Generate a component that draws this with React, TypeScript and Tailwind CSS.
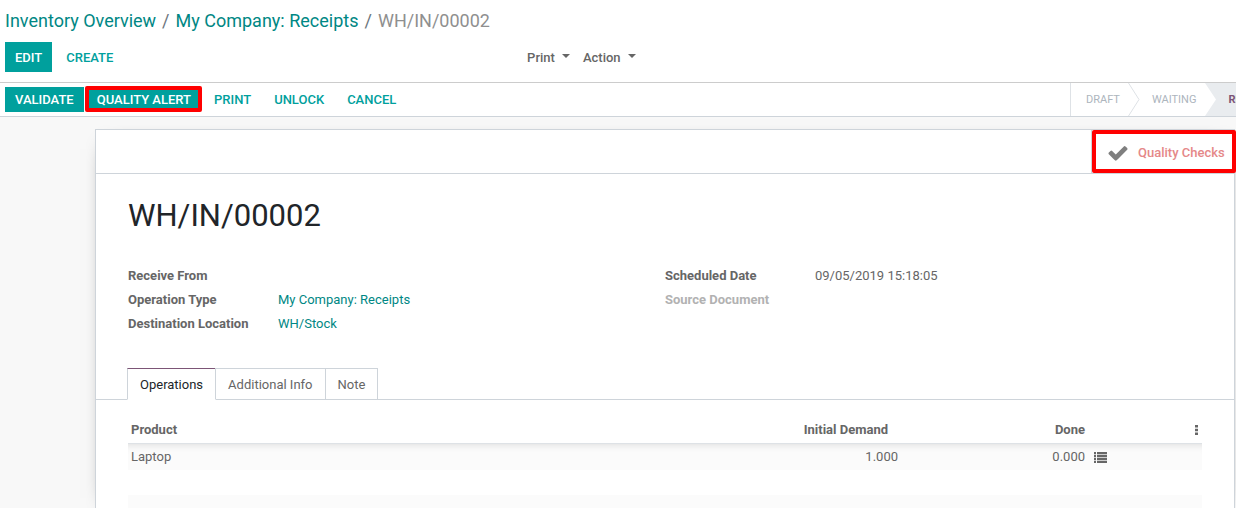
import React from "react";

const Caret = () => (
  <svg className="mb-1 h-1 w-2" viewBox="0 0 8 4" fill="currentColor" aria-hidden="true">
    <path d="M0 0h8L4 4z" />
  </svg>
);

const Chevron = ({ filled = false }: { filled?: boolean }) => (
  <svg className="h-full w-3 shrink-0" viewBox="0 0 12 33" preserveAspectRatio="none" aria-hidden="true">
    {filled && <path d="M0 0h12v33H0L11 16.5z" fill="#e9ecef" />}
    {!filled && <path d="M0.5 0L11 16.5L0.5 33" fill="none" stroke="#dee2e6" strokeWidth="1" />}
  </svg>
);

const CheckIcon = () => (
  <svg className="size-[22px] shrink-0" viewBox="0 0 1792 1792" fill="#7f7f7f" aria-hidden="true">
    <path d="M1671 566q0 40-28 68l-724 724-136 136q-28 28-68 28t-68-28l-136-136-362-362q-28-28-28-68t28-68l136-136q28-28 68-28t68 28l294 295 656-657q28-28 68-28t68 28l136 136q28 28 28 68z" />
  </svg>
);

const ListIcon = () => (
  <svg className="h-[11px] w-[13px]" viewBox="0 0 13 11" fill="currentColor" aria-hidden="true">
    <path d="M0 0h2v2H0zM3 0h10v2H3zM0 3h2v2H0zM3 3h10v2H3zM0 6h2v2H0zM3 6h10v2H3zM0 9h2v2H0zM3 9h10v2H3z" />
    <path d="M0 2h2v1H0zM3 2h10v1H3zM0 5h2v1H0zM3 5h10v1H3zM0 8h2v1H0zM3 8h10v1H3z" opacity="0.3" />
  </svg>
);

const DotsIcon = () => (
  <svg className="h-[10px] w-[3px]" viewBox="0 0 3 10" fill="currentColor" aria-hidden="true">
    <path d="M0 0h3v2.6H0zM0 3.7h3v2.6H0zM0 7.4h3V10H0z" />
  </svg>
);

const Field = ({ label, muted = false, children }: { label: string; muted?: boolean; children?: React.ReactNode }) => (
  <div className="flex h-6 items-center">
    <dt className={muted ? "w-[150px] shrink-0 font-bold text-[#b2b2b2]" : "w-[150px] shrink-0 font-bold"}>{label}</dt>
    <dd>{children}</dd>
  </div>
);

const linkButton = "h-[25px] px-[10px] font-medium uppercase text-[#00a09d]";

export default function App() {
  return (
    <div className="flex h-screen flex-col overflow-hidden bg-white font-['Roboto',sans-serif] text-[13px] leading-5 text-[#666666]">
      <header className="shrink-0 border-b border-[#cccccc]">
        <nav aria-label="Breadcrumb" className="flex h-[42px] items-center px-[5px] text-lg">
          <a href="#overview" className="text-[#008784]">Inventory Overview</a>
          <span className="px-[6px] text-[#6c757d]">/</span>
          <a href="#receipts" className="text-[#008784]">My Company: Receipts</a>
          <span className="px-[6px] text-[#6c757d]">/</span>
          <span className="text-[#8f8f8f]">WH/IN/00002</span>
        </nav>
        <div className="flex pb-[10px]">
          <div className="flex w-[42%] gap-1 pl-[5px]">
            <button className="h-[30px] bg-[#00a09d] px-[10px] pt-px font-medium text-white uppercase">Edit</button>
            <button className="h-[30px] px-[10px] pt-px font-medium text-[#00a09d] uppercase">Create</button>
          </div>
          <div className="flex gap-[13px] pt-px pl-2 font-medium">
            <button className="flex items-center gap-[7px]">Print <Caret /></button>
            <button className="flex items-center gap-[7px]">Action <Caret /></button>
          </div>
        </div>
      </header>

      <div className="flex h-[34px] shrink-0 items-stretch justify-between border-b border-[#ced4da] pl-[5px]">
        <div className="flex items-center">
          <button className="h-[25px] bg-[#00a09d] px-[10px] font-medium text-white uppercase">Validate</button>
          <button className="mr-[2px] mb-px ml-px flex h-[26px] items-center rounded-xs border-4 border-[#ff0000] bg-[#00a09d] pt-px pr-[7px] pl-2 font-medium text-white uppercase">
            Quality Alert
          </button>
          <div className="flex gap-[3px]">
            <button className={linkButton}>Print</button>
            <button className={linkButton}>Unlock</button>
            <button className={linkButton}>Cancel</button>
          </div>
        </div>
        <ol className="flex w-[166px] overflow-hidden border-l border-[#dee2e6] text-[11px] text-[#adb5bd] uppercase">
          <li className="flex shrink-0 items-center gap-2 pl-[15px]">Draft <Chevron /></li>
          <li className="flex shrink-0 items-center gap-[9px] pl-3">Waiting <Chevron filled /></li>
          <li className="flex shrink-0 items-center bg-[#e9ecef] pr-3 pl-[11px] font-bold text-[#7c5576]">Ready</li>
        </ol>
      </div>

      <main className="flex min-h-0 flex-1 bg-[#f8f8f8] pt-3 pr-px pl-[95px]">
        <section className="min-w-0 flex-1 border border-b-0 border-[#ced4da] bg-white shadow-[0_5px_20px_-15px_#000000]">
          <div className="flex h-11 justify-end border-b border-[#ced4da]">
            <button className="relative flex w-[143px] items-center gap-[9px] border-l border-[#ced4da] pt-[3px] pl-[15px] font-medium text-[#e58888]">
              <CheckIcon />
              <span className="whitespace-nowrap">Quality Checks</span>
              <span className="absolute top-0 -right-[2px] bottom-0 left-0 rounded-xs border-4 border-[#ff0000]" />
            </button>
          </div>

          <h1 className="mt-6 px-8 text-[31px] leading-9 text-[#212529]">WH/IN/00002</h1>

          <div className="mt-[30px] grid grid-cols-2 px-8">
            <dl>
              <Field label="Receive From" />
              <Field label="Operation Type"><a href="#type" className="text-[#008784]">My Company: Receipts</a></Field>
              <Field label="Destination Location"><a href="#stock" className="text-[#008784]">WH/Stock</a></Field>
            </dl>
            <dl>
              <Field label="Scheduled Date">09/05/2019 15:18:05</Field>
              <Field label="Source Document" muted />
            </dl>
          </div>

          <div role="tablist" className="mt-8 flex border-b border-[#ced4da] pl-[31px]">
            <button role="tab" aria-selected="true" className="-mb-px h-8 border border-[#ced4da] border-t-[#7c5576] border-b-white bg-white px-3 pt-px text-[#212529]">Operations</button>
            <button role="tab" aria-selected="false" className="-ml-px h-[31px] border border-b-0 border-[#ced4da] px-3 pt-px">Additional Info</button>
            <button role="tab" aria-selected="false" className="-ml-px h-[31px] border border-b-0 border-[#ced4da] px-3 pt-px">Note</button>
          </div>

          <div className="px-8 pt-4">
            <table className="w-full table-fixed border-collapse">
              <colgroup>
                <col />
                <col className="w-[120px]" />
                <col className="w-[187px]" />
                <col className="w-[98px]" />
                <col className="w-4" />
              </colgroup>
              <thead>
                <tr className="h-7 shadow-[inset_0_-1px_0_#dee2e6]">
                  <th className="px-[3px] text-left">Product</th>
                  <th className="pr-[13px] text-right">Initial Demand</th>
                  <th className="pr-[3px] text-right">Done</th>
                  <th />
                  <th className="pl-[9px]">
                    <button aria-label="Optional columns" className="block"><DotsIcon /></button>
                  </th>
                </tr>
              </thead>
              <tbody>
                <tr className="h-[26px] bg-[#fbfbfb] shadow-[inset_0_8px_8px_-8px_rgba(0,0,0,0.15)]">
                  <td className="px-[3px]">Laptop</td>
                  <td className="pr-[3px] text-right">1.000</td>
                  <td className="pr-[3px] text-right">0.000</td>
                  <td className="pl-[6px]">
                    <button aria-label="Detailed operations" className="block"><ListIcon /></button>
                  </td>
                  <td />
                </tr>
                <tr className="h-[25px]"><td colSpan={5} /></tr>
                <tr className="h-[26px] bg-[#fbfbfb]"><td colSpan={5} /></tr>
              </tbody>
            </table>
          </div>
        </section>
      </main>
    </div>
  );
}
